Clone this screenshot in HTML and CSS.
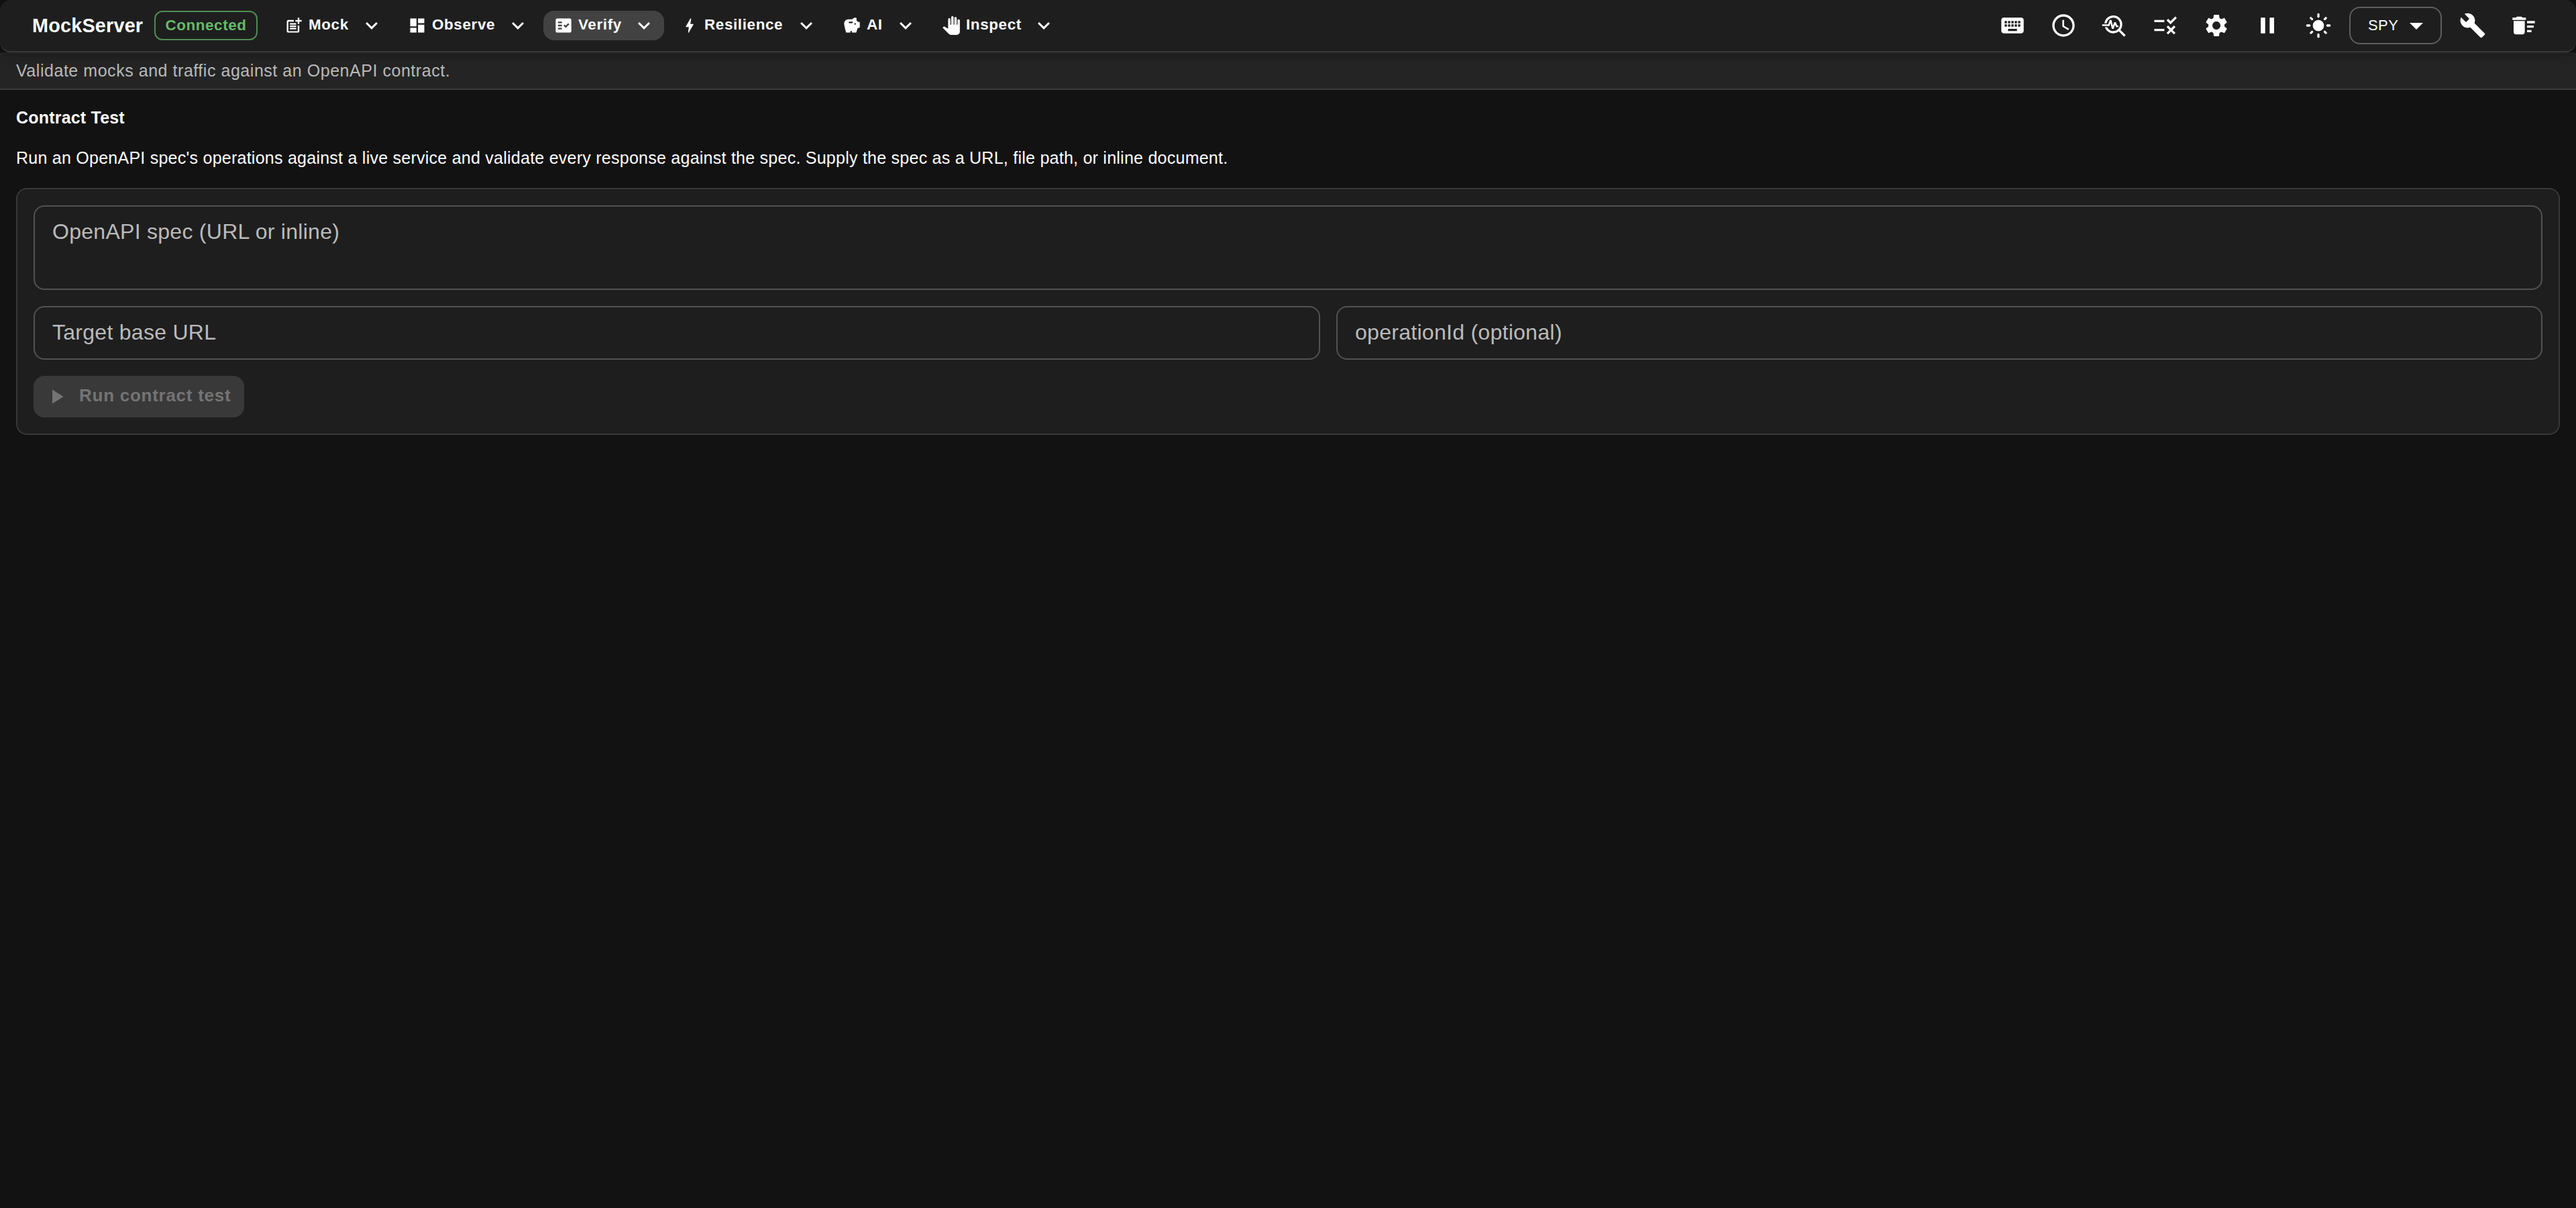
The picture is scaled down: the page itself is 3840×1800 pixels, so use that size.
FILE: index.html
```
<!DOCTYPE html>
<html lang="en">
  <head>
    <meta charset="UTF-8">
    <title>MockServer</title>
    <link rel="stylesheet" href="styles.css">
  </head>

  <body>

    <header class="appbar">
      <h1 class="brand">MockServer</h1>
      <span class="chip">Connected</span>

      <nav class="menu">
        <button class="menu-item mock">
          <svg class="icon" viewBox="0 0 24 24"><path d="M17 19.22H5V7h7V5H5c-1.1 0-2 .9-2 2v12c0 1.1.9 2 2 2h12c1.1 0 2-.9 2-2v-7h-2v7.22z"/><path d="M19 2h-2v3h-3v2h3v3h2V7h3V5h-3V2zM7 9h8v2H7zm0 3h8v2H7zm0 3h8v2H7z"/></svg>
          <span>Mock</span>
          <svg class="arrow" viewBox="0 0 24 24"><path d="M7.41 8.59 12 13.17l4.59-4.58L18 10l-6 6-6-6 1.41-1.41z"/></svg>
        </button>
        <button class="menu-item observe">
          <svg class="icon" viewBox="0 0 24 24"><path d="M3 13h8V3H3v10zm0 8h8v-6H3v6zm10 0h8V11h-8v10zm0-18v6h8V3h-8z"/></svg>
          <span>Observe</span>
          <svg class="arrow" viewBox="0 0 24 24"><path d="M7.41 8.59 12 13.17l4.59-4.58L18 10l-6 6-6-6 1.41-1.41z"/></svg>
        </button>
        <button class="menu-item verify active">
          <svg class="icon" viewBox="0 0 24 24"><path fill-rule="evenodd" d="M20 3H4c-1.1 0-2 .9-2 2v14c0 1.1.9 2 2 2h16c1.1 0 2-.9 2-2V5c0-1.1-.9-2-2-2zM10 17H5v-2h5v2zm0-4H5v-2h5v2zm0-4H5V7h5v2zm4.82 6L12 12.16l1.41-1.41 1.41 1.42L17.99 9l1.42 1.42L14.82 15z"/></svg>
          <span>Verify</span>
          <svg class="arrow" viewBox="0 0 24 24"><path d="M7.41 8.59 12 13.17l4.59-4.58L18 10l-6 6-6-6 1.41-1.41z"/></svg>
        </button>
        <button class="menu-item resilience">
          <svg class="icon" viewBox="0 0 24 24"><path d="M11 21h-1l1-7H7.5c-.58 0-.57-.32-.38-.66.19-.34.05-.08.07-.12C8.48 10.94 10.42 7.54 13 3h1l-1 7h3.5c.49 0 .56.33.47.51l-.07.15C12.96 17.55 11 21 11 21z"/></svg>
          <span>Resilience</span>
          <svg class="arrow" viewBox="0 0 24 24"><path d="M7.41 8.59 12 13.17l4.59-4.58L18 10l-6 6-6-6 1.41-1.41z"/></svg>
        </button>
        <button class="menu-item ai">
          <svg class="icon" viewBox="0 0 24 24"><path d="m19.83 7.5-2.27-2.27c.07-.42.18-.81.32-1.15.08-.18.12-.37.12-.58 0-.83-.67-1.5-1.5-1.5-1.64 0-3.09.79-4 2h-5C4.46 4 2 6.46 2 9.5S4.5 21 4.5 21H10v-2h2v2h5.5l1.68-5.59 2.82-.94V7.5h-2.17zM13 9H8V7h5v2zm3 2c-.55 0-1-.45-1-1s.45-1 1-1 1 .45 1 1-.45 1-1 1z"/></svg>
          <span>AI</span>
          <svg class="arrow" viewBox="0 0 24 24"><path d="M7.41 8.59 12 13.17l4.59-4.58L18 10l-6 6-6-6 1.41-1.41z"/></svg>
        </button>
        <button class="menu-item inspect">
          <svg class="icon" viewBox="0 0 24 24"><path d="M23 5.5V20c0 2.2-1.8 4-4 4h-7.3c-1.08 0-2.1-.43-2.85-1.19L1 14.83s1.26-1.23 1.3-1.25c.22-.19.49-.29.79-.29.22 0 .42.06.6.16.04.01 4.31 2.46 4.31 2.46V4c0-.83.67-1.5 1.5-1.5S11 3.17 11 4v7h1V1.5c0-.83.67-1.5 1.5-1.5S15 .67 15 1.5V11h1V2.5c0-.83.67-1.5 1.5-1.5s1.5.67 1.5 1.5V11h1V5.5c0-.83.67-1.5 1.5-1.5s1.5.67 1.5 1.5z"/></svg>
          <span>Inspect</span>
          <svg class="arrow" viewBox="0 0 24 24"><path d="M7.41 8.59 12 13.17l4.59-4.58L18 10l-6 6-6-6 1.41-1.41z"/></svg>
        </button>
      </nav>

      <div class="tools">
        <button class="tool" aria-label="Keyboard shortcuts">
          <svg viewBox="0 0 24 24"><path d="M20 5H4c-1.1 0-1.99.9-1.99 2L2 17c0 1.1.9 2 2 2h16c1.1 0 2-.9 2-2V7c0-1.1-.9-2-2-2zm-9 3h2v2h-2V8zm0 3h2v2h-2v-2zM8 8h2v2H8V8zm0 3h2v2H8v-2zm-1 2H5v-2h2v2zm0-3H5V8h2v2zm9 7H8v-2h8v2zm0-4h-2v-2h2v2zm0-3h-2V8h2v2zm3 3h-2v-2h2v2zm0-3h-2V8h2v2z"/></svg>
        </button>
        <button class="tool" aria-label="Clock">
          <svg viewBox="0 0 24 24"><path d="M11.99 2C6.47 2 2 6.48 2 12s4.47 10 9.99 10C17.52 22 22 17.52 22 12S17.52 2 11.99 2zM12 20c-4.42 0-8-3.58-8-8s3.58-8 8-8 8 3.58 8 8-3.58 8-8 8zm.5-13H11v6l5.25 3.15.75-1.23-4.5-2.67z"/></svg>
        </button>
        <button class="tool" aria-label="Troubleshoot">
          <svg viewBox="0 0 24 24"><path d="m22 20.59-4.69-4.69C18.37 14.55 19 12.85 19 11c0-4.42-3.58-8-8-8-4.08 0-7.44 3.05-7.93 7h2.02C5.57 7.17 8.03 5 11 5c3.31 0 6 2.69 6 6s-2.69 6-6 6c-2.42 0-4.5-1.44-5.45-3.5H3.4C4.45 16.69 7.46 19 11 19c1.85 0 3.55-.63 4.9-1.69L20.59 22 22 20.59z"/><path d="M8.43 9.69 9.65 15h1.64l1.26-3.78.95 2.28h2V12h-1l-1.25-3h-1.54l-1.12 3.37L9.35 7H7.7l-1.25 4H1v1.5h6.55z"/></svg>
        </button>
        <button class="tool" aria-label="Rules">
          <svg viewBox="0 0 24 24"><path d="M16.54 11 13 7.46l1.41-1.41 2.12 2.12 4.24-4.24 1.41 1.41L16.54 11zM11 7H2v2h9V7zm10 6.41L19.59 12 17 14.59 14.41 12 13 13.41 15.59 16 13 18.59 14.41 20 17 17.41 19.59 20 21 18.59 18.41 16 21 13.41zM11 15H2v2h9v-2z"/></svg>
        </button>
        <button class="tool" aria-label="Settings">
          <svg viewBox="0 0 24 24"><path d="M19.14 12.94c.04-.3.06-.61.06-.94 0-.32-.02-.64-.07-.94l2.03-1.58c.18-.14.23-.41.12-.61l-1.92-3.32c-.12-.22-.37-.29-.59-.22l-2.39.96c-.5-.38-1.03-.7-1.62-.94l-.36-2.54c-.04-.24-.24-.41-.48-.41h-3.84c-.24 0-.43.17-.47.41l-.36 2.54c-.59.24-1.13.57-1.62.94l-2.39-.96c-.22-.08-.47 0-.59.22L2.74 8.87c-.12.21-.08.47.12.61l2.03 1.58c-.05.3-.09.63-.09.94s.02.64.07.94l-2.03 1.58c-.18.14-.23.41-.12.61l1.92 3.32c.12.22.37.29.59.22l2.39-.96c.5.38 1.03.7 1.62.94l.36 2.54c.05.24.24.41.48.41h3.84c.24 0 .44-.17.47-.41l.36-2.54c.59-.24 1.13-.56 1.62-.94l2.39.96c.22.08.47 0 .59-.22l1.92-3.32c.12-.22.07-.47-.12-.61l-2.01-1.58zM12 15.6c-1.98 0-3.6-1.62-3.6-3.6s1.62-3.6 3.6-3.6 3.6 1.62 3.6 3.6-1.62 3.6-3.6 3.6z"/></svg>
        </button>
        <button class="tool" aria-label="Pause">
          <svg viewBox="0 0 24 24"><path d="M6 19h4V5H6v14zm8-14v14h4V5h-4z"/></svg>
        </button>
        <button class="tool" aria-label="Theme">
          <svg viewBox="0 0 24 24"><path d="M12 7c-2.76 0-5 2.24-5 5s2.24 5 5 5 5-2.24 5-5-2.24-5-5-5zM2 13h2c.55 0 1-.45 1-1s-.45-1-1-1H2c-.55 0-1 .45-1 1s.45 1 1 1zm18 0h2c.55 0 1-.45 1-1s-.45-1-1-1h-2c-.55 0-1 .45-1 1s.45 1 1 1zM11 2v2c0 .55.45 1 1 1s1-.45 1-1V2c0-.55-.45-1-1-1s-1 .45-1 1zm0 18v2c0 .55.45 1 1 1s1-.45 1-1v-2c0-.55-.45-1-1-1s-1 .45-1 1zM5.99 4.58c-.39-.39-1.03-.39-1.41 0-.39.39-.39 1.03 0 1.41l1.06 1.06c.39.39 1.03.39 1.41 0s.39-1.03 0-1.41L5.99 4.58zm12.37 12.37c-.39-.39-1.03-.39-1.41 0-.39.39-.39 1.03 0 1.41l1.06 1.06c.39.39 1.03.39 1.41 0 .39-.39.39-1.03 0-1.41l-1.06-1.06zm1.06-10.96c.39-.39.39-1.03 0-1.41-.39-.39-1.03-.39-1.41 0l-1.06 1.06c-.39.39-.39 1.03 0 1.41s1.03.39 1.41 0l1.06-1.06zM7.05 18.36c.39-.39.39-1.03 0-1.41-.39-.39-1.03-.39-1.41 0l-1.06 1.06c-.39.39-.39 1.03 0 1.41s1.03.39 1.41 0l1.06-1.06z"/></svg>
        </button>
        <button class="mode">
          <span>SPY</span>
          <svg viewBox="0 0 24 24"><path d="m7 10 5 5 5-5z"/></svg>
        </button>
        <button class="tool" aria-label="Tools">
          <svg viewBox="0 0 24 24"><path d="m22.7 19-9.1-9.1c.9-2.3.4-5-1.5-6.9-2-2-5-2.4-7.4-1.3L9 6 6 9 1.6 4.7C.4 7.1.9 10.1 2.9 12.1c1.9 1.9 4.6 2.4 6.9 1.5l9.1 9.1c.4.4 1 .4 1.4 0l2.3-2.3c.5-.4.5-1.1.1-1.4z"/></svg>
        </button>
        <button class="tool" aria-label="Clear">
          <svg viewBox="0 0 24 24"><path d="M15 16h4v2h-4zm0-8h7v2h-7zm0 4h6v2h-6zM3 18c0 1.1.9 2 2 2h6c1.1 0 2-.9 2-2V8H3v10zM14 5h-3l-1-1H6L5 5H2v2h12z"/></svg>
        </button>
      </div>
    </header>

    <div class="subheader">Validate mocks and traffic against an OpenAPI contract.</div>

    <main>
      <h2>Contract Test</h2>
      <p class="intro">Run an OpenAPI spec's operations against a live service and validate every response against the spec. Supply the spec as a URL, file path, or inline document.</p>

      <form class="card">
        <div class="field spec">OpenAPI spec (URL or inline)</div>
        <div class="row">
          <div class="field target">Target base URL</div>
          <div class="field operation">operationId (optional)</div>
        </div>
        <button class="run" type="button" disabled>
          <svg viewBox="0 0 24 24"><path d="M8 5v14l11-7z"/></svg>
          <span>Run contract test</span>
        </button>
      </form>
    </main>

  </body>
</html>
```
FILE: styles.css
```
* {
  box-sizing: border-box;
}

body {
  margin: 0;
  background: #121212;
  color: #fff;
  font-family: "Liberation Sans", Helvetica, Arial, sans-serif;
}

h1, h2, p {
  margin: 0;
}

button {
  margin: 0;
  padding: 0;
  border: 0;
  background: none;
  color: inherit;
  font-family: inherit;
}

svg {
  display: block;
  flex: none;
  fill: currentColor;
}

/* top bar */

.appbar {
  position: relative;
  z-index: 1;
  display: flex;
  align-items: center;
  height: 78px;
  padding: 0 48px;
  background: #1e1e1e;
  border-bottom: 2px solid #383838;
  border-radius: 16px;
  box-shadow: 0 2px 0 rgba(255, 255, 255, 0.04), 0 4px 16px rgba(0, 0, 0, 0.3);
}

.brand {
  width: 182px;
  font-size: 28.8px;
  font-weight: 700;
  letter-spacing: 0.2px;
}

.chip {
  display: flex;
  align-items: center;
  justify-content: center;
  width: 154px;
  height: 44px;
  border: 2px solid rgba(102, 187, 106, 0.7);
  border-radius: 12px;
  color: #66bb6a;
  font-size: 22.4px;
  font-weight: 700;
  letter-spacing: 0.6px;
}

.menu {
  display: flex;
  gap: 8px;
  margin-left: 24px;
}

.menu-item {
  display: flex;
  align-items: center;
  height: 44px;
  padding: 0 12px 0 16px;
  border-radius: 16px;
  font-size: 22.4px;
  font-weight: 700;
  letter-spacing: 0.64px;
}

.menu-item span {
  margin-left: 8px;
  padding-bottom: 2px;
}

.menu-item.active {
  background: #424242;
}

.mock { width: 176px; }
.observe { width: 210px; }
.verify { width: 180px; }
.resilience { width: 234px; }
.ai { width: 140px; }
.inspect { width: 198px; }

.icon {
  width: 28px;
  height: 28px;
}

.arrow {
  width: 36px;
  height: 36px;
  margin-left: auto;
}

.tools {
  display: flex;
  align-items: center;
  gap: 16px;
  margin-left: auto;
}

.tool {
  display: flex;
  align-items: center;
  justify-content: center;
  width: 60px;
  height: 60px;
}

.tool svg {
  width: 40px;
  height: 40px;
}

.mode {
  display: flex;
  align-items: center;
  justify-content: space-between;
  width: 138px;
  height: 56px;
  padding: 0 12px 0 26px;
  border: 2px solid #5e5e5e;
  border-radius: 16px;
  font-size: 22px;
  letter-spacing: 0.4px;
}

.mode svg {
  width: 48px;
  height: 48px;
}

.subheader {
  height: 56px;
  padding-left: 24px;
  background: #242424;
  border-bottom: 2px solid #3b3b3b;
  color: #b9b9b9;
  font-size: 25px;
  line-height: 54px;
  letter-spacing: 0.54px;
}

/* contract test */

main {
  padding: 24px;
}

h2 {
  margin-bottom: 25px;
  font-size: 25px;
  line-height: 35px;
  letter-spacing: 0.2px;
}

.intro {
  margin-bottom: 27px;
  font-size: 25px;
  line-height: 35px;
  letter-spacing: 0.25px;
}

.card {
  display: flex;
  flex-direction: column;
  gap: 24px;
  padding: 24px;
  background: #1e1e1e;
  border: 2px solid #383838;
  border-radius: 16px;
}

.row {
  display: flex;
  gap: 24px;
}

.field {
  height: 80px;
  padding: 14px 26px;
  border: 2px solid #525252;
  border-radius: 16px;
  color: #bbb;
  font-size: 32px;
  line-height: 46px;
  letter-spacing: 0.28px;
}

.spec {
  height: 126px;
}

.target {
  width: 1918px;
}

.operation {
  flex: 1;
}

.run {
  display: flex;
  align-items: center;
  width: 314px;
  height: 62px;
  padding-left: 16px;
  background: #393939;
  border-radius: 16px;
  color: #747474;
  font-size: 26px;
  font-weight: 700;
  letter-spacing: 0.74px;
}

.run svg {
  width: 36px;
  height: 36px;
}

.run span {
  margin-left: 16px;
  padding-bottom: 4px;
  white-space: nowrap;
}
```
